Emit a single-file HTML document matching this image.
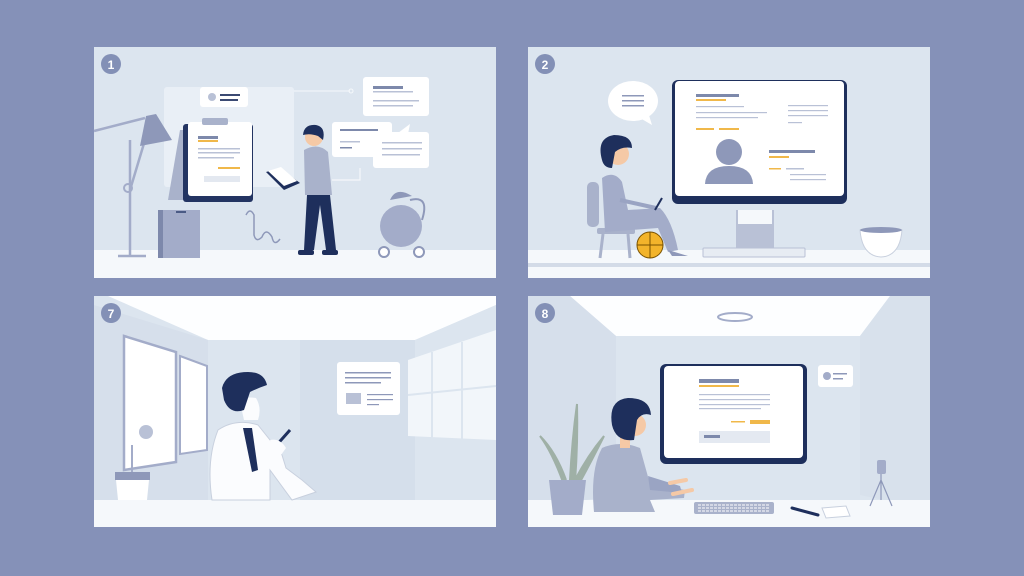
<!DOCTYPE html>
<html><head><meta charset="utf-8"><style>
html,body{margin:0;padding:0;background:#8591b8;width:1024px;height:576px;overflow:hidden}
svg{display:block}
text{font-family:"Liberation Sans",sans-serif;font-weight:bold}
</style></head><body>
<svg width="1024" height="576" viewBox="0 0 1024 576" xmlns="http://www.w3.org/2000/svg">
<rect width="1024" height="576" fill="#8591b8"/>

<!-- PANEL 1 -->
<rect x="94" y="47" width="402" height="231" fill="#dce5ef"/>
<rect x="94" y="250" width="402" height="28" fill="#f5f8fb"/>
<circle cx="111" cy="64" r="10" fill="#8390b6"/><text x="111" y="69" font-size="12" fill="#fff" text-anchor="middle">1</text>
<rect x="164" y="87" width="130" height="100" rx="3" fill="#e9eff6"/>
<path d="M294 91 H350" stroke="#f5f8fb" stroke-width="1"/><circle cx="351" cy="91" r="2" fill="none" stroke="#f5f8fb"/>
<rect x="200" y="87" width="48" height="20" rx="3" fill="#fff"/>
<circle cx="212" cy="97" r="4" fill="#b9c1d6"/><rect x="220" y="94" width="20" height="2" fill="#3b4a73"/><rect x="220" y="99" width="18" height="2" fill="#3b4a73"/>
<polygon points="168,200 180,130 190,130 190,200" fill="#a9b2cb"/>
<rect x="183" y="124" width="70" height="78" rx="3" fill="#233462"/>
<rect x="188" y="122" width="64" height="74" rx="3" fill="#fff"/>
<rect x="202" y="118" width="26" height="7" rx="2" fill="#a9b2cb"/>
<rect x="198" y="136" width="20" height="3" fill="#7d89ab"/><rect x="198" y="140" width="20" height="2" fill="#f0b84a"/>
<rect x="198" y="148" width="42" height="1.5" fill="#b9c1d6"/><rect x="198" y="152" width="42" height="1.5" fill="#b9c1d6"/><rect x="198" y="157" width="36" height="1.5" fill="#b9c1d6"/>
<rect x="218" y="167" width="22" height="2" fill="#f0b84a"/>
<rect x="204" y="176" width="36" height="6" fill="#e3e8f0"/>
<rect x="158" y="210" width="42" height="48" fill="#a3acc9"/><rect x="158" y="210" width="5" height="48" fill="#7d88ab"/>
<rect x="176" y="211" width="10" height="2" fill="#4a5a85"/>
<line x1="130" y1="140" x2="130" y2="256" stroke="#a3acc9" stroke-width="2.5"/>
<line x1="118" y1="256" x2="146" y2="256" stroke="#a3acc9" stroke-width="2.5"/>
<line x1="130" y1="190" x2="145" y2="140" stroke="#a3acc9" stroke-width="2.5"/>
<circle cx="128" cy="188" r="4" fill="none" stroke="#a3acc9" stroke-width="2"/>
<line x1="94" y1="131" x2="145" y2="118" stroke="#a3acc9" stroke-width="2.5"/>
<polygon points="146,116 156,114 172,140 140,146" fill="#8e98b9"/>
<path d="M246 215 q4 -8 8 0 v20 q2 8 8 2 q4 -10 10 0 q2 10 8 2" fill="none" stroke="#8e98b9" stroke-width="1.5"/>
<rect x="363" y="77" width="66" height="39" rx="3" fill="#fff"/>
<rect x="373" y="86" width="30" height="3" fill="#7d89ab"/><rect x="373" y="91" width="40" height="1.5" fill="#b9c1d6"/><rect x="373" y="100" width="46" height="1.5" fill="#b9c1d6"/><rect x="373" y="105" width="40" height="1.5" fill="#b9c1d6"/>
<rect x="332" y="122" width="60" height="35" rx="3" fill="#fff"/>
<rect x="340" y="129" width="38" height="2" fill="#7d89ab"/><rect x="340" y="141" width="20" height="1.5" fill="#b9c1d6"/><rect x="340" y="147" width="12" height="1.5" fill="#7d89ab"/>
<rect x="373" y="132" width="56" height="36" rx="3" fill="#fff"/><polygon points="398,133 410,124 408,134" fill="#fff"/>
<rect x="382" y="142" width="40" height="1.5" fill="#b9c1d6"/><rect x="382" y="148" width="40" height="1.5" fill="#b9c1d6"/><rect x="382" y="154" width="38" height="1.5" fill="#b9c1d6"/>
<path d="M332 180 H360 V168" fill="none" stroke="#f5f8fb" stroke-width="1.2"/>
<!-- man 1 -->
<path d="M307 195 L304 250 H314 L320 205 L326 250 H336 L330 195 Z" fill="#1e2f5c"/>
<rect x="298" y="250" width="16" height="5" rx="2" fill="#1e2f5c"/><rect x="322" y="250" width="16" height="5" rx="2" fill="#1e2f5c"/>
<path d="M304 150 Q318 142 328 152 L332 195 H305 Z" fill="#a9b2cb"/>
<circle cx="314" cy="137" r="9" fill="#f5c9a6"/>
<path d="M303 135 Q304 124 316 125 Q326 127 323 140 L318 136 Q310 133 303 135Z" fill="#1e2f5c"/>
<polygon points="266,172 280,168 300,183 284,190" fill="#1e2f5c"/><polygon points="268,171 281,167 297,181 284,186" fill="#fff"/>
<!-- robot -->
<circle cx="401" cy="226" r="21" fill="#a3acc9"/>
<circle cx="384" cy="252" r="5" fill="#fff" stroke="#8e98b9" stroke-width="2"/><circle cx="419" cy="252" r="5" fill="#fff" stroke="#8e98b9" stroke-width="2"/>
<path d="M410 200 Q430 195 422 220" fill="none" stroke="#8e98b9" stroke-width="2"/>
<path d="M390 200 Q396 186 412 196 Z" fill="#8e98b9"/>

<!-- PANEL 2 -->
<rect x="528" y="47" width="402" height="231" fill="#dce5ef"/>
<rect x="528" y="250" width="402" height="28" fill="#f5f8fb"/>
<rect x="528" y="263" width="402" height="4" fill="#d3dbe7"/>
<circle cx="545" cy="64" r="10" fill="#8390b6"/><text x="545" y="69" font-size="12" fill="#fff" text-anchor="middle">2</text>
<ellipse cx="633" cy="101" rx="25" ry="20" fill="#fff"/><polygon points="640,118 652,125 648,112" fill="#fff"/>
<rect x="622" y="95" width="22" height="1.5" fill="#8e98b9"/><rect x="622" y="100" width="22" height="1.5" fill="#8e98b9"/><rect x="622" y="105" width="22" height="1.5" fill="#8e98b9"/>
<rect x="736" y="210" width="38" height="40" fill="#b9c1d6"/><rect x="738" y="210" width="34" height="14" fill="#f5f8fb"/>
<rect x="703" y="248" width="102" height="9" rx="1" fill="#e7ecf3" stroke="#b9c1d6"/>
<rect x="672" y="80" width="175" height="124" rx="6" fill="#1e2f5c"/>
<rect x="675" y="81" width="169" height="115" rx="4" fill="#fff"/>
<rect x="696" y="94" width="43" height="3" fill="#7d89ab"/><rect x="696" y="99" width="30" height="2" fill="#f0b84a"/>
<rect x="696" y="106" width="48" height="1.2" fill="#b9c1d6"/><rect x="696" y="112" width="71" height="1.2" fill="#b9c1d6"/><rect x="696" y="117" width="62" height="1.2" fill="#b9c1d6"/>
<rect x="696" y="128" width="18" height="2" fill="#f0b84a"/><rect x="719" y="128" width="20" height="2" fill="#f0b84a"/>
<rect x="788" y="105" width="40" height="1.2" fill="#b9c1d6"/><rect x="788" y="110" width="40" height="1.2" fill="#b9c1d6"/><rect x="788" y="115" width="40" height="1.2" fill="#b9c1d6"/><rect x="788" y="122" width="14" height="1.2" fill="#b9c1d6"/>
<circle cx="729" cy="152" r="13" fill="#8e98b9"/><path d="M705 184 Q706 166 729 166 Q752 166 753 184 Z" fill="#8e98b9"/>
<rect x="769" y="150" width="46" height="3" fill="#7d89ab"/><rect x="769" y="156" width="20" height="2" fill="#f0b84a"/>
<rect x="769" y="168" width="12" height="1.5" fill="#f0b84a"/><rect x="786" y="168" width="18" height="1.5" fill="#b9c1d6"/>
<rect x="790" y="174" width="36" height="1.2" fill="#b9c1d6"/><rect x="790" y="179" width="36" height="1.2" fill="#b9c1d6"/>
<!-- woman -->
<rect x="587" y="182" width="12" height="45" rx="5" fill="#a9b2cb"/>
<rect x="597" y="228" width="38" height="6" rx="2" fill="#a9b2cb"/>
<line x1="603" y1="234" x2="600" y2="258" stroke="#a9b2cb" stroke-width="3"/><line x1="628" y1="234" x2="630" y2="258" stroke="#a9b2cb" stroke-width="3"/>
<path d="M602 178 Q614 170 622 182 L628 210 L660 208 Q672 220 678 250 L668 252 L658 228 L605 232 Z" fill="#a3acc9"/>
<path d="M668 250 L688 256 L672 256 Z" fill="#8e98b9"/>
<path d="M620 200 L656 208" stroke="#9aa4c3" stroke-width="4"/>
<line x1="655" y1="210" x2="662" y2="198" stroke="#1e2f5c" stroke-width="2"/>
<circle cx="618" cy="154" r="11" fill="#f5c9a6"/>
<path d="M602 160 Q596 138 614 135 Q632 135 632 148 Q622 146 615 152 L612 168 Q604 168 602 160Z" fill="#1e2f5c"/>
<circle cx="650" cy="245" r="13" fill="#f3b42b" stroke="#7a5200" stroke-width="1"/>
<path d="M650 232 V258 M637 245 H663" stroke="#7a5200" stroke-width="1"/>
<path d="M860 230 H902 Q900 256 881 257 Q862 256 860 230Z" fill="#fff" stroke="#c8d0de"/>
<ellipse cx="881" cy="230" rx="21" ry="3" fill="#8e98b9"/>

<!-- PANEL 3 -->
<rect x="94" y="296" width="402" height="231" fill="#dce5ef"/>
<polygon points="108,296 496,296 496,305 415,340 208,340" fill="#fdfeff"/>
<polygon points="94,305 208,340 208,500 94,505" fill="#d6dfeb"/>
<rect x="300" y="340" width="115" height="160" fill="#d5dfeb"/>
<polygon points="415,340 496,305 496,505 415,500" fill="#dce5ef"/>
<rect x="94" y="500" width="402" height="27" fill="#f5f8fb"/>
<circle cx="111" cy="313" r="10" fill="#8390b6"/><text x="111" y="318" font-size="12" fill="#fff" text-anchor="middle">7</text>
<polygon points="124,336 176,352 176,462 124,470" fill="#fff" stroke="#a3acc9" stroke-width="2.5"/>
<polygon points="180,356 207,366 207,450 180,454" fill="#fff" stroke="#a3acc9" stroke-width="2"/>
<polygon points="408,360 496,330 496,440 408,436" fill="#f2f6fa"/>
<path d="M432 352 V438 M462 342 V440 M408 395 L496 386" stroke="#dce5ef" stroke-width="2"/>
<rect x="337" y="362" width="63" height="53" rx="3" fill="#fff"/>
<rect x="345" y="372" width="46" height="1.5" fill="#8e98b9"/><rect x="345" y="377" width="46" height="1.5" fill="#8e98b9"/><rect x="345" y="382" width="36" height="1.5" fill="#8e98b9"/>
<rect x="346" y="393" width="15" height="11" fill="#b9c1d6"/><rect x="367" y="394" width="26" height="1.2" fill="#8e98b9"/><rect x="367" y="399" width="26" height="1.2" fill="#8e98b9"/><rect x="367" y="404" width="12" height="1.2" fill="#8e98b9"/>
<rect x="115" y="472" width="35" height="8" fill="#8e98b9"/><path d="M116 480 H149 L147 500 H118Z" fill="#fff"/>
<line x1="132" y1="472" x2="132" y2="445" stroke="#a3acc9" stroke-width="2"/><circle cx="146" cy="432" r="7" fill="#b9c1d6"/>
<!-- man 3 -->
<path d="M218 430 Q236 418 258 425 L282 455 L286 468 L302 480 L316 492 L292 500 L270 470 L270 500 H212 Q206 460 218 430Z" fill="#fbfcfe" stroke="#c8d0de"/>
<polygon points="243,428 252,428 258,470 252,472" fill="#1e2f5c"/>
<path d="M240 402 Q244 396 256 398 Q262 408 258 420 L244 420Z" fill="#fbfcfe"/>
<path d="M222 388 Q226 372 248 372 Q264 372 267 385 Q258 388 250 392 L244 410 Q230 415 224 400Z" fill="#1e2f5c"/>
<path d="M274 448 L290 430" stroke="#1e2f5c" stroke-width="3"/>
<path d="M270 440 Q280 438 286 448 L276 462Z" fill="#fbfcfe"/>

<!-- PANEL 4 -->
<rect x="528" y="296" width="402" height="231" fill="#dce5ef"/>
<polygon points="570,296 890,296 860,336 616,336" fill="#fdfeff"/>
<polygon points="528,296 570,296 616,336 616,495 528,510" fill="#d6dfeb"/>
<polygon points="890,296 930,296 930,510 860,495 860,336" fill="#d8e1ec"/>
<rect x="528" y="500" width="402" height="27" fill="#f5f8fb"/>
<ellipse cx="735" cy="317" rx="17" ry="4" fill="none" stroke="#a3acc9" stroke-width="2"/>
<circle cx="545" cy="313" r="10" fill="#8390b6"/><text x="545" y="318" font-size="12" fill="#fff" text-anchor="middle">8</text>
<rect x="660" y="364" width="147" height="100" rx="6" fill="#1e2f5c"/>
<rect x="664" y="366" width="139" height="92" rx="4" fill="#fff"/>
<rect x="699" y="379" width="40" height="4" fill="#7d89ab"/><rect x="699" y="385" width="40" height="2" fill="#f0b84a"/>
<rect x="699" y="394" width="71" height="1.2" fill="#b9c1d6"/><rect x="699" y="399" width="71" height="1.2" fill="#b9c1d6"/><rect x="699" y="404" width="71" height="1.2" fill="#b9c1d6"/><rect x="699" y="408" width="62" height="1.2" fill="#b9c1d6"/>
<rect x="731" y="421" width="14" height="1.5" fill="#f0b84a"/><rect x="750" y="420" width="20" height="4" fill="#f0b84a"/>
<rect x="699" y="431" width="71" height="12" fill="#e4e9f1"/><rect x="704" y="435" width="16" height="3" fill="#7d89ab"/>
<rect x="818" y="365" width="35" height="22" rx="3" fill="#fff"/><circle cx="827" cy="376" r="4" fill="#a3acc9"/><rect x="833" y="373" width="14" height="1.5" fill="#8e98b9"/><rect x="833" y="378" width="10" height="1.5" fill="#8e98b9"/>
<path d="M563 482 Q552 452 540 436 Q556 452 566 480 M570 480 Q572 440 577 404 Q578 442 575 482 M575 480 Q588 455 604 436 Q592 460 580 482" fill="#9fb0a6" stroke="#9fb0a6" stroke-width="2"/>
<path d="M549 480 H586 L582 515 H553Z" fill="#a3acc9"/>
<!-- person 4 -->
<path d="M602 448 Q620 440 640 448 L650 484 L685 490 L684 498 L650 500 L655 512 H594 Q590 470 602 448Z" fill="#a9b2cb"/>
<path d="M648 476 L680 486 L682 493 L650 490Z" fill="#9aa4c3"/>
<path d="M670 483 L686 480 M673 494 L692 490" stroke="#f5c9a6" stroke-width="4" stroke-linecap="round"/>
<rect x="620" y="436" width="10" height="12" fill="#f5c9a6"/>
<circle cx="635" cy="425" r="11" fill="#f5c9a6"/>
<path d="M612 425 Q608 400 628 398 Q650 398 651 415 Q642 412 637 420 L634 440 Q616 442 612 425Z" fill="#1e2f5c"/>
<rect x="694" y="502" width="80" height="12" rx="2" fill="#a9b2cb"/>
<path d="M698 505 H770 M698 508 H770 M698 511 H770" stroke="#fff" stroke-width="1" stroke-dasharray="3 1"/>
<line x1="792" y1="508" x2="818" y2="515" stroke="#1e2f5c" stroke-width="3" stroke-linecap="round"/>
<polygon points="822,508 846,506 850,516 826,518" fill="#fff" stroke="#c8d0de"/>
<rect x="877" y="460" width="9" height="14" rx="2" fill="#a3acc9"/>
<path d="M881 474 V500 M881 480 L870 506 M881 480 L892 506" stroke="#8e98b9" stroke-width="1.2"/>
</svg>
</body></html>
